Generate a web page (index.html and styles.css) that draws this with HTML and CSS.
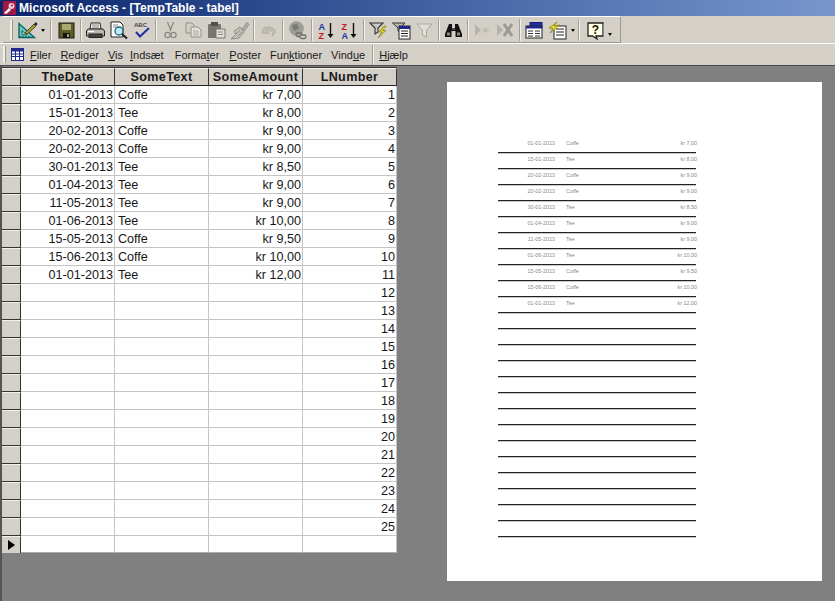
FILE: index.html
```html
<!DOCTYPE html>
<html lang="da">
<head>
<meta charset="utf-8">
<title>Microsoft Access - [TempTable - tabel]</title>
<link rel="stylesheet" href="styles.css">
</head>
<body>
<div class="app">
  <header class="titlebar">
    <svg class="title-icon" width="15" height="15" viewBox="0 0 15 15"><rect x="1" y="0" width="13" height="14" fill="#a01848"/><path d="M2 12 L7 7 L9 9 L4 13 Z" fill="#fff"/><circle cx="9.5" cy="5" r="3" fill="#f4c8d8"/><circle cx="10" cy="4.5" r="1" fill="#a01848"/></svg>
    <span class="title-text">Microsoft Access - [TempTable - tabel]</span>
  </header>

  <div class="toolrow">
    <div class="toolbar">
      <span class="grip"></span>
      <svg class="ic" viewBox="0 0 23 22"><path d="M3 4.5V18.5H18.5Z" fill="#7cc4bc" stroke="#006a6a" stroke-width="1.4"/><path d="M6 11.5V15.8H10.5Z" fill="#d4d0c8" stroke="#006a6a"/><path d="M4 17v1.5M7 17v1.5M10 17v1.5M13 17v1.5" stroke="#004c4c"/><path d="M9 14 L18 5 L20 7 L11 15.5 Z" fill="#a89a20" stroke="#333" stroke-width=".8"/><path d="M18 5 L20 3 L21.5 5 L20 7Z" fill="#222"/></svg>
      <span class="caret"></span>
      <span class="sep sep-wide"></span>
      <svg class="ic" viewBox="0 0 23 22"><rect x="4" y="4" width="15" height="15" fill="#5c5c26" stroke="#1d1d10"/><rect x="7" y="5" width="9" height="6" fill="#a8a870"/><rect x="8" y="14" width="7" height="5" fill="#15150c"/><rect x="12" y="15" width="2" height="3" fill="#999"/></svg>
      <span class="sep"></span>
      <svg class="ic" viewBox="0 0 23 22"><path d="M7 4H16L17 10H6Z" fill="#fff" stroke="#222"/><path d="M8 6h7M8 8h7" stroke="#777"/><path d="M4 10H19L20.500 12V17H2.500V12Z" fill="#b8b8b0" stroke="#222"/><rect x="5" y="15" width="13" height="3.500" fill="#444" stroke="#222"/><path d="M4 12.500h6" stroke="#fff"/></svg>
      <svg class="ic" viewBox="0 0 23 22"><path d="M4 3H13L16 6V18H4Z" fill="#fff" stroke="#222"/><path d="M6 6h5M6 8h4" stroke="#888"/><circle cx="12" cy="12" r="4" fill="#bfe8f4" stroke="#1f6a80" stroke-width="1.300"/><path d="M15 15L20 19.500" stroke="#222" stroke-width="2.200"/></svg>
      <svg class="ic" viewBox="0 0 23 22"><text x="4" y="8" class="ic-abc">ABC</text><path d="M6 13L10 17.500L19 9" fill="none" stroke="#2030a0" stroke-width="2"/></svg>
      <span class="sep"></span>
      <svg class="ic" viewBox="0 0 23 22"><path d="M8.500 3L12 12M14.500 3L11 12" stroke="#8a8a84" stroke-width="1.300" fill="none"/><circle cx="8.500" cy="16" r="2.600" fill="none" stroke="#8a8a84" stroke-width="1.300"/><circle cx="14.500" cy="16" r="2.600" fill="none" stroke="#8a8a84" stroke-width="1.300"/></svg>
      <svg class="ic" viewBox="0 0 23 22"><path d="M4 4H10L12 6V14H4Z" fill="#d4d0c8" stroke="#8e8e88"/><path d="M9 8H16L19 11V18H9Z" fill="#e6e3dc" stroke="#8e8e88"/><path d="M11 12h6M11 14h6M11 16h6" stroke="#a8a8a2"/></svg>
      <svg class="ic" viewBox="0 0 23 22"><rect x="3" y="5" width="13" height="14" rx="1" fill="#77776f"/><rect x="6" y="3" width="7" height="4" fill="#50504a"/><path d="M11 10H20V19H11Z" fill="#e2dfd8" stroke="#77776f"/><path d="M13 13h5M13 15.500h5" stroke="#8e8e88"/></svg>
      <svg class="ic" viewBox="0 0 23 22"><path d="M14 10L19 3.500L21 5.500L16 12Z" fill="#b2b0a8" stroke="#8e8e88"/><path d="M6 12L12 8L16 13L11 19L3 20L8 15Z" fill="#c2c0b8" stroke="#8e8e88"/><path d="M8 15L12 11M10 17L14 13" stroke="#8e8e88"/></svg>
      <span class="sep"></span>
      <svg class="ic" viewBox="0 0 23 22"><path d="M6 10C9 7 15 7 18 11C18.500 13 17.500 16 15 17C17 14 15 11 10 11.500L12 14.500L5 14Z" fill="#bebcb4" stroke="#a4a29a" stroke-width=".6"/></svg>
      <span class="sep"></span>
      <svg class="ic" viewBox="0 0 23 22"><circle cx="10.500" cy="9.500" r="7" fill="#9c9c96" stroke="#a8a8a2"/><path d="M6 6L11 5L13 9L9 12L7 10Z" fill="#7a7a74"/><rect x="10" y="14" width="6" height="3.500" rx="1.700" fill="none" stroke="#6e6e68" stroke-width="1.300"/><rect x="14" y="16" width="6" height="3.500" rx="1.700" fill="#d4d0c8" stroke="#6e6e68" stroke-width="1.300"/></svg>
      <span class="sep"></span>
      <svg class="ic" viewBox="0 0 23 22"><text x="3.500" y="11" class="ic-sort ic-blue">A</text><text x="3.500" y="19.500" class="ic-sort ic-red">Z</text><path d="M15.500 4V16" stroke="#111" stroke-width="1.400"/><path d="M12.500 15H18.500L15.500 19Z" fill="#111"/></svg>
      <svg class="ic" viewBox="0 0 23 22"><text x="3.500" y="11" class="ic-sort ic-red">Z</text><text x="3.500" y="19.500" class="ic-sort ic-blue">A</text><path d="M15.500 4V16" stroke="#111" stroke-width="1.400"/><path d="M12.500 15H18.500L15.500 19Z" fill="#111"/></svg>
      <span class="sep"></span>
      <svg class="ic" viewBox="0 0 23 22"><path d="M3 4H16L11 9V13L8 15V9Z" fill="#c8c8c0" stroke="#333" stroke-width="1.100"/><path d="M17 7L12 13H15L11 19L19 11.500H15.500L19 7Z" fill="#e6d820" stroke="#6e6a10" stroke-width=".6"/></svg>
      <svg class="ic" viewBox="0 0 23 22"><path d="M2.500 4H15L10 9V12H8V9Z" fill="#b8b8b0" stroke="#333"/><rect x="9" y="7" width="11" height="13" fill="#fff" stroke="#222"/><rect x="9" y="7" width="11" height="3" fill="#20288c"/><path d="M11 12h7M11 14.500h7M11 17h7" stroke="#222"/></svg>
      <svg class="ic" viewBox="0 0 23 22"><path d="M4 5H19L13.500 11V18L9.500 16V11Z" fill="#e2dfd8" stroke="#a8a8a2"/></svg>
      <span class="sep"></span>
      <svg class="ic" viewBox="0 0 23 22"><path d="M7 5H10V9H13V5H16L20 15V18H13.500V12H9.500V18H3V15Z" fill="#111"/><rect x="5" y="13.500" width="3" height="3" fill="#8a8a84"/><rect x="15" y="13.500" width="3" height="3" fill="#8a8a84"/><path d="M10 10h3" stroke="#888"/></svg>
      <span class="sep"></span>
      <svg class="ic" viewBox="0 0 23 22"><path d="M4 5L10 11L4 17Z" fill="#b4b2aa"/><path d="M14 7L15 10L18 8.500L16 11L19 13L15.500 12.500L14.500 15L13.500 12.500L11 13L13 11L11 8.500L13.500 10Z" fill="#bcbab2"/></svg>
      <svg class="ic" viewBox="0 0 23 22"><path d="M3 5L9 11L3 17Z" fill="#b4b2aa"/><path d="M10 5L18 17M18 5L10 17" stroke="#9a9a94" stroke-width="3"/></svg>
      <span class="sep"></span>
      <svg class="ic" viewBox="0 0 23 22"><rect x="7" y="3.500" width="12" height="5" fill="#2030a0" stroke="#181880"/><rect x="3" y="7" width="16" height="12" fill="#fff" stroke="#222"/><rect x="3" y="7" width="16" height="2.500" fill="#20288c"/><path d="M5 12h5M5 14.500h5M5 17h5M12 12h5M12 14.500h5M12 17h5" stroke="#333"/></svg>
      <svg class="ic" viewBox="0 0 23 22"><rect x="8" y="7" width="12" height="13" fill="#fff" stroke="#222"/><path d="M10 10h8M10 13h8M10 16h8" stroke="#222"/><path d="M3 9L11 3L8 7L14 6L4 14L7 9.500Z" fill="#e6d820" stroke="#6e6a10" stroke-width=".6"/></svg>
      <span class="caret"></span>
      <span class="sep sep-help"></span>
      <svg class="ic" viewBox="0 0 23 22"><path d="M4 4H19V17H12L13 20L8.500 17H4Z" fill="#fffce0" stroke="#222" stroke-width="1.300"/><path d="M19.500 5V18" stroke="#8a8a84"/><text x="11.500" y="15" class="ic-help">?</text></svg>
      <span class="caret caret-low"></span>
    </div>
  </div>

  <nav class="menubar">
    <span class="grip grip-menu"></span>
    <svg class="menu-icon" width="13" height="13" viewBox="0 0 13 13"><rect x=".5" y=".5" width="12" height="12" fill="#fff" stroke="#20288c"/><rect x="1" y="1" width="11" height="2.500" fill="#20288c"/><path d="M1 6h11M1 8.500h11M4.500 3v9M8.500 3v9" stroke="#20288c"/></svg>
    <span class="menu m-filer"><u>F</u>iler</span>
    <span class="menu m-rediger"><u>R</u>ediger</span>
    <span class="menu m-vis"><u>V</u>is</span>
    <span class="menu m-indsaet"><u>I</u>ndsæt</span>
    <span class="menu m-formater">Forma<u>t</u>er</span>
    <span class="menu m-poster"><u>P</u>oster</span>
    <span class="menu m-funk">Fun<u>k</u>tioner</span>
    <span class="menu m-vindue">Vind<u>u</u>e</span>
    <span class="menu-sep"></span>
    <span class="menu m-hjaelp"><u>H</u>jælp</span>
  </nav>

  <main class="workspace">
    <section class="datasheet">
      <div class="row head"><div class="sel"></div><div class="hc">TheDate</div><div class="hc">SomeText</div><div class="hc">SomeAmount</div><div class="hc">LNumber</div></div>
      <div class="row"><div class="sel"></div><div class="c r">01-01-2013</div><div class="c">Coffe</div><div class="c r">kr 7,00</div><div class="c r">1</div></div>
      <div class="row"><div class="sel"></div><div class="c r">15-01-2013</div><div class="c">Tee</div><div class="c r">kr 8,00</div><div class="c r">2</div></div>
      <div class="row"><div class="sel"></div><div class="c r">20-02-2013</div><div class="c">Coffe</div><div class="c r">kr 9,00</div><div class="c r">3</div></div>
      <div class="row"><div class="sel"></div><div class="c r">20-02-2013</div><div class="c">Coffe</div><div class="c r">kr 9,00</div><div class="c r">4</div></div>
      <div class="row"><div class="sel"></div><div class="c r">30-01-2013</div><div class="c">Tee</div><div class="c r">kr 8,50</div><div class="c r">5</div></div>
      <div class="row"><div class="sel"></div><div class="c r">01-04-2013</div><div class="c">Tee</div><div class="c r">kr 9,00</div><div class="c r">6</div></div>
      <div class="row"><div class="sel"></div><div class="c r">11-05-2013</div><div class="c">Tee</div><div class="c r">kr 9,00</div><div class="c r">7</div></div>
      <div class="row"><div class="sel"></div><div class="c r">01-06-2013</div><div class="c">Tee</div><div class="c r">kr 10,00</div><div class="c r">8</div></div>
      <div class="row"><div class="sel"></div><div class="c r">15-05-2013</div><div class="c">Coffe</div><div class="c r">kr 9,50</div><div class="c r">9</div></div>
      <div class="row"><div class="sel"></div><div class="c r">15-06-2013</div><div class="c">Coffe</div><div class="c r">kr 10,00</div><div class="c r">10</div></div>
      <div class="row"><div class="sel"></div><div class="c r">01-01-2013</div><div class="c">Tee</div><div class="c r">kr 12,00</div><div class="c r">11</div></div>
      <div class="row"><div class="sel"></div><div class="c"></div><div class="c"></div><div class="c"></div><div class="c r">12</div></div>
      <div class="row"><div class="sel"></div><div class="c"></div><div class="c"></div><div class="c"></div><div class="c r">13</div></div>
      <div class="row"><div class="sel"></div><div class="c"></div><div class="c"></div><div class="c"></div><div class="c r">14</div></div>
      <div class="row"><div class="sel"></div><div class="c"></div><div class="c"></div><div class="c"></div><div class="c r">15</div></div>
      <div class="row"><div class="sel"></div><div class="c"></div><div class="c"></div><div class="c"></div><div class="c r">16</div></div>
      <div class="row"><div class="sel"></div><div class="c"></div><div class="c"></div><div class="c"></div><div class="c r">17</div></div>
      <div class="row"><div class="sel"></div><div class="c"></div><div class="c"></div><div class="c"></div><div class="c r">18</div></div>
      <div class="row"><div class="sel"></div><div class="c"></div><div class="c"></div><div class="c"></div><div class="c r">19</div></div>
      <div class="row"><div class="sel"></div><div class="c"></div><div class="c"></div><div class="c"></div><div class="c r">20</div></div>
      <div class="row"><div class="sel"></div><div class="c"></div><div class="c"></div><div class="c"></div><div class="c r">21</div></div>
      <div class="row"><div class="sel"></div><div class="c"></div><div class="c"></div><div class="c"></div><div class="c r">22</div></div>
      <div class="row"><div class="sel"></div><div class="c"></div><div class="c"></div><div class="c"></div><div class="c r">23</div></div>
      <div class="row"><div class="sel"></div><div class="c"></div><div class="c"></div><div class="c"></div><div class="c r">24</div></div>
      <div class="row"><div class="sel"></div><div class="c"></div><div class="c"></div><div class="c"></div><div class="c r">25</div></div>
      <div class="row last"><div class="sel"><span class="current"></span></div><div class="c"></div><div class="c"></div><div class="c"></div><div class="c"></div></div>
    </section>

    <section class="paper">
      <div class="pr"><span class="pd">01-01-2013</span><span class="pt">Coffe</span><span class="pa">kr 7,00</span></div>
      <div class="pr"><span class="pd">15-01-2013</span><span class="pt">Tee</span><span class="pa">kr 8,00</span></div>
      <div class="pr"><span class="pd">20-02-2013</span><span class="pt">Coffe</span><span class="pa">kr 9,00</span></div>
      <div class="pr"><span class="pd">20-02-2013</span><span class="pt">Coffe</span><span class="pa">kr 9,00</span></div>
      <div class="pr"><span class="pd">30-01-2013</span><span class="pt">Tee</span><span class="pa">kr 8,50</span></div>
      <div class="pr"><span class="pd">01-04-2013</span><span class="pt">Tee</span><span class="pa">kr 9,00</span></div>
      <div class="pr"><span class="pd">11-05-2013</span><span class="pt">Tee</span><span class="pa">kr 9,00</span></div>
      <div class="pr"><span class="pd">01-06-2013</span><span class="pt">Tee</span><span class="pa">kr 10,00</span></div>
      <div class="pr"><span class="pd">15-05-2013</span><span class="pt">Coffe</span><span class="pa">kr 9,50</span></div>
      <div class="pr"><span class="pd">15-06-2013</span><span class="pt">Coffe</span><span class="pa">kr 10,00</span></div>
      <div class="pr"><span class="pd">01-01-2013</span><span class="pt">Tee</span><span class="pa">kr 12,00</span></div>
      <div class="pr"></div><div class="pr"></div><div class="pr"></div><div class="pr"></div><div class="pr"></div><div class="pr"></div><div class="pr"></div>
      <div class="pr"></div><div class="pr"></div><div class="pr"></div><div class="pr"></div><div class="pr"></div><div class="pr"></div><div class="pr"></div>
    </section>
  </main>
</div>
</body>
</html>
```

FILE: styles.css
```css
html, body {
  margin: 0;
  padding: 0;
  height: 100%;
  overflow: hidden;
}
body {
  font-family: "Liberation Sans", Arial, sans-serif;
  background: #808080;
}
.app {
  display: flex;
  flex-direction: column;
  height: 601px;
}

/* Title bar */
.titlebar {
  display: flex;
  align-items: center;
  height: 16px;
  flex: none;
  padding-left: 2px;
  background: linear-gradient(90deg, #0a246a 0%, #3a5a9c 45%, #7896cc 100%);
  overflow: hidden;
}
.title-icon { flex: none; margin-right: 2px; }
.title-text {
  color: #fff;
  font-weight: 700;
  font-size: 12px;
  letter-spacing: 0.05px;
  white-space: nowrap;
}

/* Standard toolbar */
.toolrow {
  flex: none;
  height: 27px;
  background: #d4d0c8;
  border-bottom: 1px solid #fff;
}
.toolbar {
  display: flex;
  align-items: center;
  box-sizing: content-box;
  width: 604px;
  height: 25px;
  margin-left: 3px;
  padding-left: 13px;
  border-top: 1px solid #fff;
  border-right: 1px solid #9a978f;
  border-bottom: 1px solid #9a978f;
}
.grip {
  width: 2px;
  height: 20px;
  background: #f2f0ea;
  border-right: 1px solid #9a978f;
  margin-left: -6px;
  margin-right: 3px;
  flex: none;
}
.ic {
  width: 23px;
  height: 22px;
  flex: none;
}
.caret {
  width: 0;
  height: 0;
  flex: none;
  margin: 2px 1.5px 0;
  border-left: 2.5px solid transparent;
  border-right: 2.5px solid transparent;
  border-top: 3px solid #111;
}
.caret-low { margin-top: 9px; }
.sep {
  width: 2px;
  height: 22px;
  flex: none;
  margin: 0 2px;
  background: linear-gradient(90deg, #a3a097 50%, #f2f0ea 50%);
}
.sep-wide { margin: 0 3.5px; }
.sep-help { margin: 0 3.5px 0 2px; }
.ic-abc {
  font: 700 6px "Liberation Sans", sans-serif;
  fill: #444;
}
.ic-sort { font: 700 9px "Liberation Sans", sans-serif; }
.ic-blue { fill: #2030a0; }
.ic-red { fill: #c01820; }
.ic-help {
  font: 700 12px "Liberation Sans", sans-serif;
  fill: #111;
  text-anchor: middle;
}

/* Menu bar */
.menubar {
  flex: none;
  display: flex;
  align-items: center;
  height: 21px;
  background: #d4d0c8;
  font-size: 11px;
  color: #1a1a1a;
}
.grip-menu {
  margin: 0 0 0 3px;
  height: 17px;
}
.menu-icon { flex: none; margin-left: 5px; }
.menu { white-space: nowrap; flex: none; }
.m-filer { margin-left: 6px; }
.m-rediger { margin-left: 9px; }
.m-vis { margin-left: 9px; }
.m-indsaet { margin-left: 7px; }
.m-formater { margin-left: 11px; }
.m-poster { margin-left: 10px; }
.m-funk { margin-left: 9px; }
.m-vindue { margin-left: 9px; }
.m-hjaelp { margin-left: 5px; }
.menu-sep {
  width: 2px;
  height: 20px;
  flex: none;
  margin-left: 7px;
  background: linear-gradient(90deg, #a3a097 50%, #f2f0ea 50%);
}

/* Workspace */
.workspace {
  flex: 1;
  min-height: 0;
  display: flex;
  align-items: flex-start;
  background: #808080;
  border-top: 1px solid #4a4a4a;
  border-left: 2px solid #555;
  padding-top: 1px;
}

/* Datasheet */
.datasheet {
  flex: none;
  width: 395px;
  background: #fff;
  border-top: 1px solid #333;
  font-size: 12.6px;
  color: #161616;
}
.row {
  display: grid;
  grid-template-columns: 19px 94px 94px 94px 94px;
  height: 18px;
}
.row.last { height: 17px; }
.sel {
  background: #d4d0c8;
  border-top: 1px solid #f2f0ea;
  border-right: 1px solid #333;
  border-bottom: 1px solid #333;
  box-sizing: border-box;
  display: flex;
  align-items: center;
  justify-content: flex-start;
}
.last .sel { border-bottom: none; }
.hc {
  display: flex;
  align-items: center;
  justify-content: center;
  background: #d4d0c8;
  font-weight: 700;
  letter-spacing: 0.35px;
  border-top: 1px solid #f2f0ea;
  border-right: 1px solid #333;
  border-bottom: 1px solid #222;
  box-sizing: border-box;
  white-space: nowrap;
  color: #1a1a1a;
}
.c {
  display: flex;
  align-items: center;
  padding: 0 1px 0 3px;
  border-right: 1px solid #c4c4c4;
  border-bottom: 1px solid #c4c4c4;
  box-sizing: border-box;
  white-space: nowrap;
}
.c.r { justify-content: flex-end; }
.last .c { border-bottom: 1px solid #aaa; }
.current {
  width: 0;
  height: 0;
  margin-left: 6px;
  border-left: 7px solid #000;
  border-top: 5.5px solid transparent;
  border-bottom: 5.5px solid transparent;
}

/* Preview sheet */
.paper {
  flex: none;
  width: 375px;
  height: 499px;
  margin: 15px 0 0 50px;
  padding: 55px 126px 0 51px;
  box-sizing: border-box;
  background: #fff;
}
.pr {
  display: flex;
  align-items: center;
  height: 16px;
  box-sizing: border-box;
  border-bottom: 1px solid #222;
  box-shadow: 0 1px 0 #c8c8c8;
  font-size: 5.4px;
  color: #8a8a8a;
  padding-bottom: 3px;
}
.pd { width: 57px; text-align: right; flex: none; }
.pt { margin-left: 11px; flex: 1; }
.pa { margin-right: -1px; flex: none; }
```
